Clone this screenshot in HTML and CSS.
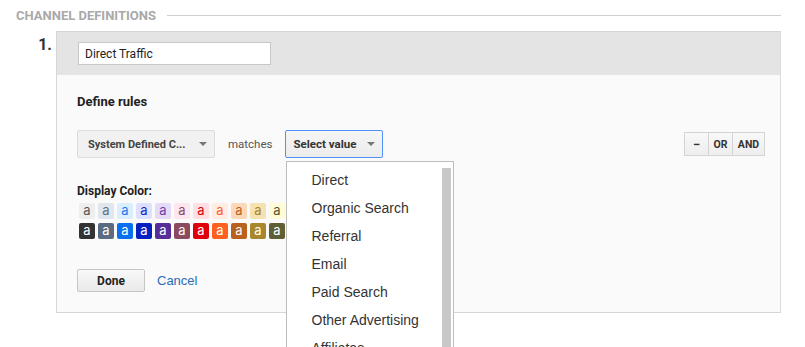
FILE: index.html
```html
<!DOCTYPE html>
<html lang="en">
<head>
  <meta charset="UTF-8">
  <title>Channel Definitions</title>
  <link rel="stylesheet" href="styles.css">
</head>
<body>
  <!-- Titulo de seccion -->
  <div class="section-title">
    <span>Channel Definitions</span>
    <div class="rule-line"></div>
  </div>

  <div class="channel">
    <div class="channel-num">1.</div>
    <div class="card">
      <div class="card-header">
        <input class="name-input" type="text" value="Direct Traffic">
      </div>
      <div class="card-body">
        <div class="card-label">Define rules</div>

        <div class="rule-row">
          <button class="select-btn dim">System Defined C... <span class="caret"></span></button>
          <span class="matches">matches</span>
          <div class="select-wrap">
            <button class="select-btn active">Select value <span class="caret"></span></button>
            <!-- Lista desplegable -->
            <div class="dropdown">
              <div class="item">Direct</div>
              <div class="item">Organic Search</div>
              <div class="item">Referral</div>
              <div class="item">Email</div>
              <div class="item">Paid Search</div>
              <div class="item">Other Advertising</div>
              <div class="item">Affiliates</div>
              <div class="thumb"></div>
            </div>
          </div>
          <div class="logic">
            <button class="minus">&minus;</button>
            <button class="or">OR</button>
            <button class="and">AND</button>
          </div>
        </div>

        <div class="color-label">Display Color:</div>
        <div class="swatches">
          <span class="sw" style="background:#eeeeee;color:#555">a</span>
          <span class="sw" style="background:#dfe6ee;color:#5f7186">a</span>
          <span class="sw" style="background:#dbeeff;color:#1b7cf0">a</span>
          <span class="sw" style="background:#dde1fd;color:#1428c8">a</span>
          <span class="sw" style="background:#e5dbf6;color:#6a3fae">a</span>
          <span class="sw" style="background:#fde6ef;color:#8c4a62">a</span>
          <span class="sw" style="background:#ffdfe2;color:#d8000c">a</span>
          <span class="sw" style="background:#ffece2;color:#ff5f1f">a</span>
          <span class="sw" style="background:#fcd8b8;color:#b8621e">a</span>
          <span class="sw" style="background:#f5e2b0;color:#a8862a">a</span>
          <span class="sw" style="background:#fffbd6;color:#555530">a</span>

          <span class="sw" style="background:#333333">a</span>
          <span class="sw" style="background:#5a6b82">a</span>
          <span class="sw" style="background:#0b70f0">a</span>
          <span class="sw" style="background:#0a1fc0">a</span>
          <span class="sw" style="background:#572d99">a</span>
          <span class="sw" style="background:#8a4a60">a</span>
          <span class="sw" style="background:#e0000b">a</span>
          <span class="sw" style="background:#ff601f">a</span>
          <span class="sw" style="background:#b8621e">a</span>
          <span class="sw" style="background:#a8882a">a</span>
          <span class="sw" style="background:#5f5f35">a</span>
        </div>

        <div class="actions">
          <button class="done-btn">Done</button>
          <a class="cancel" href="#">Cancel</a>
        </div>
      </div>
    </div>
  </div>
</body>
</html>
```

FILE: styles.css
```css
/* Estilo general */
body {
  margin: 0;
  padding: 0;
  width: 805px;
  height: 347px;
  overflow: hidden;
  background: #fff;
  font-family: Roboto, 'Liberation Sans', Arial, sans-serif;
  color: #222;
}

button {
  font-family: Roboto, 'Liberation Sans', Arial, sans-serif;
}

/* Titulo de seccion */
.section-title {
  display: flex;
  align-items: center;
  height: 31px;
  padding-left: 16px;
  margin-right: 24px;
  font-size: 13px;
  font-weight: bold;
  color: #a9a9a9;
  text-transform: uppercase;
}

.rule-line {
  flex: 1;
  height: 1px;
  background: #d0d0d0;
  margin-left: 11px;
}

/* Canal */
.channel {
  display: flex;
  margin-right: 24px;
}

.channel-num {
  width: 56px;
  box-sizing: border-box;
  padding: 5px 4px 0 0;
  text-align: right;
  font-size: 16px;
  line-height: 18px;
  font-weight: bold;
  color: #333;
}

.card {
  flex: 1;
  border: 1px solid #d6d6d6;
  border-right-color: #dcdcdc;
}

.card-header {
  background: #e4e4e4;
  padding: 10px 21px 10px;
}

.name-input {
  display: block;
  width: 193px;
  height: 23px;
  box-sizing: border-box;
  border: 1px solid #c8c8c8;
  padding: 0 6px;
  font-family: Roboto, sans-serif;
  font-size: 12px;
  color: #222;
  background: #fff;
  outline: none;
}

.card-body {
  background: #fafafa;
  padding: 19px 15px 20px 20px;
}

.card-label {
  font-size: 13px;
  line-height: 16px;
  font-weight: bold;
  color: #222;
}

/* Fila de regla */
.rule-row {
  display: flex;
  align-items: center;
  margin-top: 20px;
  height: 28px;
}

.select-btn {
  display: flex;
  align-items: center;
  justify-content: space-between;
  height: 28px;
  box-sizing: border-box;
  border: 1px solid #dcdcdc;
  border-radius: 2px;
  background: linear-gradient(#f5f5f5, #ececec);
  font-size: 11px;
  font-weight: bold;
  color: #444;
  padding: 0 6px 0 10px;
  cursor: pointer;
}

.select-btn.dim {
  width: 138px;
  background: #f1f1f1;
}

.select-btn.active {
  width: 98px;
  border-color: #4d90fe;
  padding-left: 8px;
  color: #333;
  font-size: 11.5px;
}

.caret {
  width: 0;
  height: 0;
  border-left: 4px solid transparent;
  border-right: 4px solid transparent;
  border-top: 4px solid #777;
  margin-right: 1px;
}

.matches {
  font-size: 11.5px;
  color: #555;
  margin: 0 12px 0 13px;
}

.select-wrap {
  position: relative;
}

/* Lista desplegable */
.dropdown {
  position: absolute;
  top: 31px;
  left: 1px;
  width: 168px;
  height: 200px;
  box-sizing: border-box;
  border: 1px solid #bdbdbd;
  background: #fff;
  padding-top: 4px;
  z-index: 2;
  font-family: 'Liberation Sans', Arial, sans-serif;
}

.item {
  height: 28px;
  line-height: 28px;
  padding-left: 25px;
  font-size: 14px;
  color: #333;
}

.thumb {
  position: absolute;
  top: 6px;
  right: 2px;
  width: 9px;
  height: 200px;
  background: #c8c8c8;
}

/* Botones logicos */
.logic {
  display: flex;
  margin-left: auto;
}

.logic button {
  height: 24px;
  box-sizing: border-box;
  border: 1px solid #d4d4d4;
  margin-left: -1px;
  background: linear-gradient(#f8f8f8, #eeeeee);
  font-size: 10.5px;
  font-weight: bold;
  color: #333;
  padding: 0;
}

.logic .minus {
  width: 25px;
  font-size: 13px;
}

.logic .or {
  width: 25px;
}

.logic .and {
  width: 33px;
}

/* Colores */
.color-label {
  margin-top: 26px;
  font-size: 12px;
  line-height: 14px;
  font-weight: bold;
  color: #222;
}

.swatches {
  display: grid;
  grid-template-columns: repeat(11, 16px);
  column-gap: 3px;
  row-gap: 4px;
  margin-top: 5px;
  padding-left: 2px;
}

.sw {
  width: 16px;
  height: 16px;
  border-radius: 2px;
  font-family: Inter, sans-serif;
  font-size: 13px;
  line-height: 15px;
  text-align: center;
  color: #fff;
}

/* Acciones */
.actions {
  display: flex;
  align-items: center;
  margin-top: 30px;
}

.done-btn {
  width: 68px;
  height: 23px;
  border: 1px solid #c6c6c6;
  border-radius: 2px;
  background: linear-gradient(#f9f9f9, #e9e9e9);
  font-size: 12px;
  font-weight: bold;
  color: #222;
  cursor: pointer;
}

.cancel {
  margin-left: 12px;
  font-family: 'Liberation Sans', Arial, sans-serif;
  font-size: 13px;
  color: #2a6db5;
  text-decoration: none;
}
```
